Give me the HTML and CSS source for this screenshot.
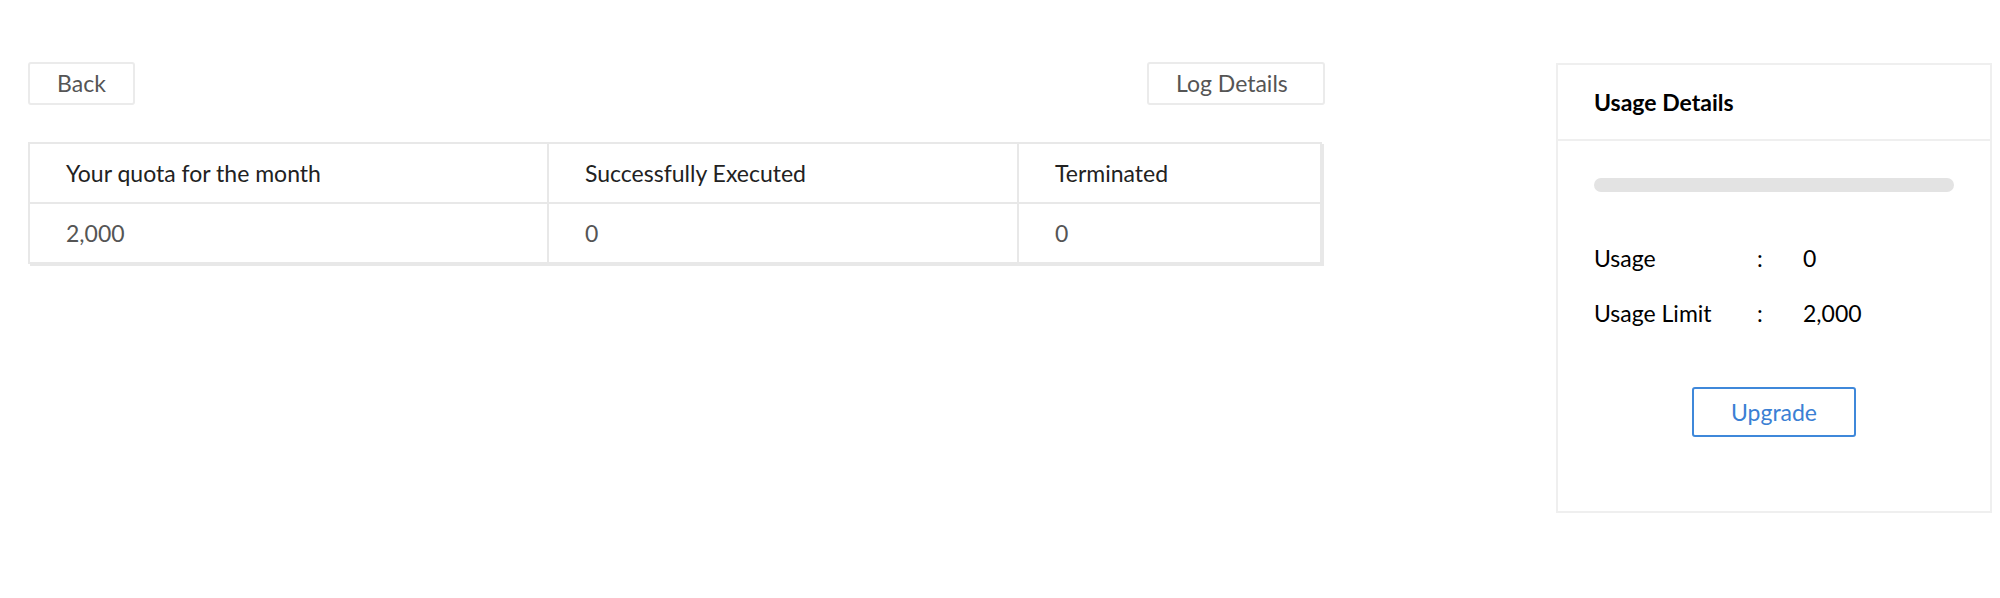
FILE: index.html
```html
<!DOCTYPE html>
<html lang="en">
<head>
<meta charset="utf-8">
<title>Usage</title>
<link rel="stylesheet" href="styles.css">
</head>
<body>
<div class="page">
  <main class="main">
    <div class="toolbar">
      <button class="btn btn-back">Back</button>
      <button class="btn btn-log">Log Details</button>
    </div>
    <div class="stats">
      <div class="cell head">Your quota for the month</div>
      <div class="cell head">Successfully Executed</div>
      <div class="cell head last">Terminated</div>
      <div class="cell val">2,000</div>
      <div class="cell val">0</div>
      <div class="cell val last">0</div>
    </div>
  </main>
  <aside class="card">
    <div class="card-head">Usage Details</div>
    <div class="card-body">
      <div class="bar"></div>
      <div class="rows">
        <div class="row"><span class="lbl">Usage</span><span class="sep">:</span><span class="num">0</span></div>
        <div class="row"><span class="lbl">Usage Limit</span><span class="sep">:</span><span class="num">2,000</span></div>
      </div>
      <div class="actions"><button class="btn-upgrade">Upgrade</button></div>
    </div>
  </aside>
</div>
</body>
</html>
```

FILE: styles.css
```css
* { box-sizing: border-box; }
html, body { margin: 0; padding: 0; background: #fff; }
body {
  font-family: Lato, "Open Sans", "Liberation Sans", sans-serif;
  font-size: 23px;
  color: #222;
}
.page {
  display: flex;
  align-items: flex-start;
  padding: 62px 8px 0 28px;
}
.main {
  width: 1297px;
  flex: none;
}
.toolbar {
  display: flex;
  justify-content: space-between;
  height: 43px;
}
.btn {
  height: 43px;
  font: inherit;
  font-size: 23px;
  color: #555;
  background: #fff;
  border: 2px solid #ebebeb;
  border-radius: 3px;
  padding: 0;
  line-height: 1;
}
.btn-back { width: 107px; }
.btn-log {
  width: 178px;
  text-align: left;
  padding-left: 27px;
}
.stats {
  margin-top: 37px;
  width: 1294px;
  display: grid;
  grid-template-columns: 519px 470px 1fr;
  border: 2px solid #e8e8e8;
  box-shadow: 2px 2px 0 #e8e8e8;
}
.cell {
  display: flex;
  align-items: center;
  padding-left: 36px;
  border-right: 2px solid #e8e8e8;
}
.cell.last { border-right: none; }
.cell.head {
  height: 60px;
  border-bottom: 2px solid #e8e8e8;
  color: #222;
}
.cell.val {
  height: 58px;
  color: #555;
}
.card {
  flex: none;
  width: 436px;
  margin-left: 231px;
  margin-top: 1px;
  border: 2px solid #efefef;
  color: #000;
}
.card-head {
  height: 76px;
  padding-left: 36px;
  display: flex;
  align-items: center;
  font-weight: 700;
  border-bottom: 2px solid #efefef;
}
.card-body {
  padding: 37px 36px 74px;
}
.bar {
  height: 14px;
  border-radius: 7px;
  background: #e3e3e3;
}
.rows { margin-top: 38px; }
.row {
  height: 55px;
  display: grid;
  grid-template-columns: 163px 46px 1fr;
  align-items: center;
}
.actions {
  margin-top: 47px;
  display: flex;
  justify-content: center;
}
.btn-upgrade {
  width: 164px;
  height: 50px;
  font: inherit;
  font-size: 23px;
  color: #3b80d4;
  background: #fff;
  border: 2px solid #3f88da;
  border-radius: 3px;
  padding: 0;
  line-height: 1;
}
```
